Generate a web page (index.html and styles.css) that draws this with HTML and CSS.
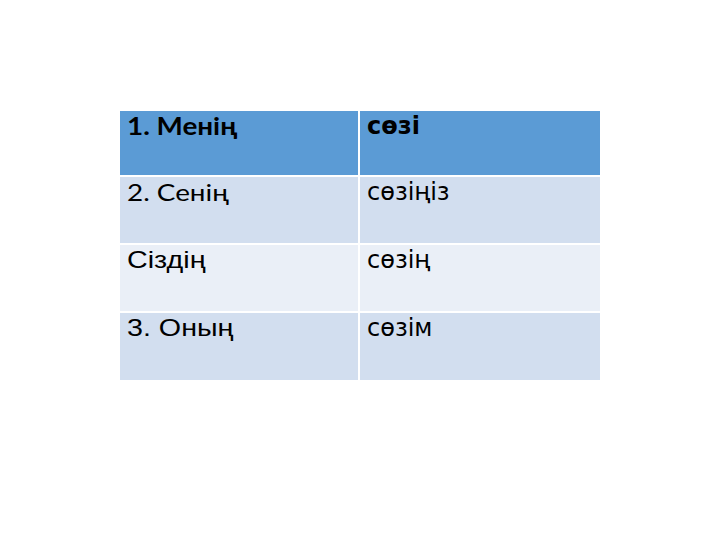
FILE: index.html
```html
<!DOCTYPE html>
<html>
<head>
<meta charset="utf-8">
<link rel="stylesheet" href="styles.css">
</head>
<body>
<div class="page">
  <table class="grid">
    <tr class="head">
      <td class="c1"><span class="lato">1. Менің</span></td>
      <td class="c2"><span class="tah">сөзі</span></td>
    </tr>
    <tr class="dark">
      <td class="c1"><span class="lato">2. Сенің</span></td>
      <td class="c2"><span class="tah">сөзіңіз</span></td>
    </tr>
    <tr class="light">
      <td class="c1"><span class="ari">Сіздің</span></td>
      <td class="c2"><span class="tah">сөзің</span></td>
    </tr>
    <tr class="dark">
      <td class="c1"><span class="ari">3. Оның</span></td>
      <td class="c2"><span class="tah">сөзім</span></td>
    </tr>
  </table>
</div>
</body>
</html>
```
FILE: styles.css
```css
html, body {
  margin: 0;
  padding: 0;
  background: #ffffff;
}
.page {
  width: 720px;
  height: 540px;
  padding: 111px 0 0 120px;
  box-sizing: border-box;
}
.grid {
  border-collapse: collapse;
  width: 480px;
  table-layout: fixed;
}
.grid td {
  box-sizing: border-box;
  height: 68px;
  padding: 0 0 0 7px;
  vertical-align: top;
  color: #000;
  overflow: visible;
}
.grid tr + tr td {
  border-top: 2px solid #ffffff;
}
.grid td.c1 {
  width: 239px;
  border-right: 2px solid #ffffff;
}
.head td { background: #5b9bd5; height: 65px; }
.dark td { background: #d2deef; }
.light td { background: #eaeff7; }
.lato, .tah, .ari {
  display: inline-block;
  transform-origin: 0 0;
  white-space: nowrap;
  line-height: 30px;
}
.lato {
  font-family: Lato, "Liberation Sans", sans-serif;
  font-size: 24px;
  transform: scaleX(1.16);
}
.head .lato { font-weight: 700; }
.tah {
  font-family: "DejaVu Sans", sans-serif;
  font-size: 24px;
}
.head .tah { font-weight: 700; }
.ari {
  font-family: "Liberation Sans", Arial, sans-serif;
  font-size: 24.5px;
  transform: scaleX(1.17);
}
```
